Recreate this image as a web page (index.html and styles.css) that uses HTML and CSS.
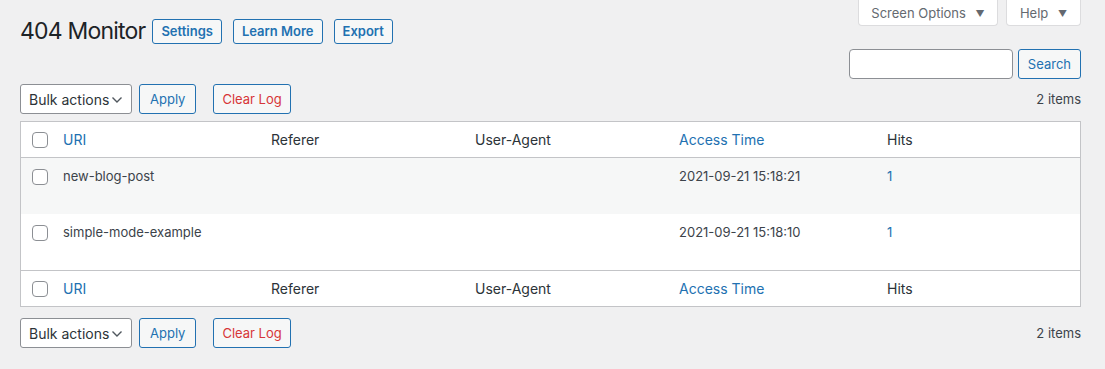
FILE: index.html
```html
<!DOCTYPE html>
<html lang="en">
<head>
    <meta charset="UTF-8">
    <meta name="viewport" content="width=device-width, initial-scale=1.0">
    <title>404 Monitor</title>
    <link rel="stylesheet" href="styles.css">
</head>
<body>
    <div class="wrap">
        <div class="header">
            <div class="title-row">
                <h1>404 Monitor</h1>
                <a class="title-action" href="#">Settings</a>
                <a class="title-action" href="#">Learn More</a>
                <a class="title-action" href="#">Export</a>
            </div>
            <div class="screen-links">
                <button class="meta-tab tab-options">Screen Options <span class="arrow">&#9660;</span></button>
                <button class="meta-tab tab-help">Help <span class="arrow">&#9660;</span></button>
            </div>
        </div>

        <div class="search-box">
            <input type="search" class="search-input">
            <button class="button search-btn">Search</button>
        </div>

        <div class="tablenav">
            <div class="actions">
                <label class="select-wrap">
                    <select class="bulk-select">
                        <option>Bulk actions</option>
                    </select>
                    <svg class="chevron" width="12" height="8" viewBox="0 0 12 8"><path d="M1.5 1.5 L6 6 L10.5 1.5" fill="none" stroke="#50575e" stroke-width="1.4"/></svg>
                </label>
                <button class="button">Apply</button>
                <button class="button danger">Clear Log</button>
            </div>
            <span class="count">2 items</span>
        </div>

        <table class="list-table">
            <colgroup>
                <col class="col-check">
                <col class="col-uri">
                <col class="col-ref">
                <col class="col-agent">
                <col class="col-time">
                <col>
            </colgroup>
            <thead>
                <tr>
                    <th class="check"><input type="checkbox"></th>
                    <th><a href="#">URI</a></th>
                    <th>Referer</th>
                    <th>User-Agent</th>
                    <th><a href="#">Access Time</a></th>
                    <th>Hits</th>
                </tr>
            </thead>
            <tbody>
                <tr class="alt">
                    <td class="check"><input type="checkbox"></td>
                    <td>new-blog-post</td>
                    <td></td>
                    <td></td>
                    <td>2021-09-21 15:18:21</td>
                    <td><a href="#">1</a></td>
                </tr>
                <tr>
                    <td class="check"><input type="checkbox"></td>
                    <td>simple-mode-example</td>
                    <td></td>
                    <td></td>
                    <td>2021-09-21 15:18:10</td>
                    <td><a href="#">1</a></td>
                </tr>
            </tbody>
            <tfoot>
                <tr>
                    <th class="check"><input type="checkbox"></th>
                    <th><a href="#">URI</a></th>
                    <th>Referer</th>
                    <th>User-Agent</th>
                    <th><a href="#">Access Time</a></th>
                    <th>Hits</th>
                </tr>
            </tfoot>
        </table>

        <div class="tablenav bottom">
            <div class="actions">
                <label class="select-wrap">
                    <select class="bulk-select">
                        <option>Bulk actions</option>
                    </select>
                    <svg class="chevron" width="12" height="8" viewBox="0 0 12 8"><path d="M1.5 1.5 L6 6 L10.5 1.5" fill="none" stroke="#50575e" stroke-width="1.4"/></svg>
                </label>
                <button class="button">Apply</button>
                <button class="button danger">Clear Log</button>
            </div>
            <span class="count">2 items</span>
        </div>
    </div>
</body>
</html>
```

FILE: styles.css
```css
html {
    background: #f0f0f1;
}
body {
    margin: 0;
    font-family: Inter, "Noto Sans", sans-serif;
    font-size: 13px;
    color: #3c434a;
}
.wrap {
    padding: 0 24px 0 20px;
}
a {
    color: #2271b1;
    text-decoration: none;
}
.header {
    display: flex;
    justify-content: space-between;
    align-items: flex-start;
}
.title-row {
    display: flex;
    align-items: center;
    margin-top: 19px;
    height: 25px;
}
h1 {
    margin: 0 5px 0 0;
    font-size: 23px;
    font-weight: 400;
    letter-spacing: -0.8px;
    line-height: 25px;
    color: #1d2327;
}
.title-action {
    border: 1px solid #2271b1;
    border-radius: 3px;
    background: #f6f7f7;
    font-weight: 600;
    padding: 0 8px;
    line-height: 23px;
    margin-left: 2px;
    margin-right: 9px;
}
.screen-links {
    display: flex;
    gap: 8px;
}
.meta-tab {
    font-family: inherit;
    font-size: 13px;
    color: #646970;
    background: #fff;
    border: 1px solid #dcdcde;
    border-top: none;
    border-radius: 0 0 4px 4px;
    height: 26px;
    padding: 0;
    white-space: nowrap;
}
.tab-options {
    width: 140px;
}
.tab-help {
    width: 75px;
}
.arrow {
    font-size: 9px;
    margin-left: 6px;
    position: relative;
    top: -1px;
}
.search-box {
    display: flex;
    justify-content: flex-end;
    gap: 5px;
    margin-top: 5px;
}
.search-input {
    width: 164px;
    height: 30px;
    box-sizing: border-box;
    border: 1px solid #8c8f94;
    border-radius: 4px;
    background: #fff;
    margin: 0;
}
.button {
    font-family: inherit;
    font-size: 13px;
    color: #2271b1;
    background: #f6f7f7;
    border: 1px solid #2271b1;
    border-radius: 3px;
    height: 30px;
    padding: 0 10px;
    margin: 0;
}
.search-btn {
    padding: 0 9px;
}
.button.danger {
    color: #d63638;
    margin-left: 10px;
    padding: 0 8px;
}
.tablenav {
    display: flex;
    justify-content: space-between;
    align-items: center;
    margin-top: 5px;
    height: 30px;
}
.tablenav.bottom {
    margin-top: 11px;
}
.actions {
    display: flex;
    gap: 7px;
}
.select-wrap {
    position: relative;
    display: block;
}
.bulk-select {
    appearance: none;
    -webkit-appearance: none;
    font-family: inherit;
    font-size: 14px;
    color: #2c3338;
    width: 112px;
    height: 30px;
    border: 1px solid #8c8f94;
    border-radius: 3px;
    background: #fff;
    padding: 0 8px;
    margin: 0;
}
.chevron {
    position: absolute;
    right: 9px;
    top: 12px;
}
.count {
    color: #3c434a;
}
.list-table {
    width: 100%;
    margin-top: 7px;
    border: 1px solid #c3c4c7;
    border-spacing: 0;
    background: #fff;
    table-layout: fixed;
}
.col-check {
    width: 32px;
}
.col-uri {
    width: 208px;
}
.col-ref {
    width: 204px;
}
.col-agent {
    width: 204px;
}
.col-time {
    width: 208px;
}
th {
    text-align: left;
    font-weight: 400;
    color: #2c3338;
    font-size: 14px;
    height: 36px;
    padding: 0 10px;
    box-sizing: border-box;
    vertical-align: middle;
}
thead th {
    border-bottom: 1px solid #c3c4c7;
}
tfoot th {
    border-top: 1px solid #c3c4c7;
}
td {
    vertical-align: top;
    height: 56px;
    padding: 8px 10px 0;
    line-height: 20px;
    box-sizing: border-box;
}
tr.alt td {
    background: #f6f7f7;
}
.check {
    padding: 0 0 0 11px;
}
td.check {
    padding-top: 11px;
}
input[type="checkbox"] {
    appearance: none;
    -webkit-appearance: none;
    display: block;
    width: 16px;
    height: 16px;
    margin: 0;
    border: 1px solid #8c8f94;
    border-radius: 4px;
    background: #fff;
}
```
